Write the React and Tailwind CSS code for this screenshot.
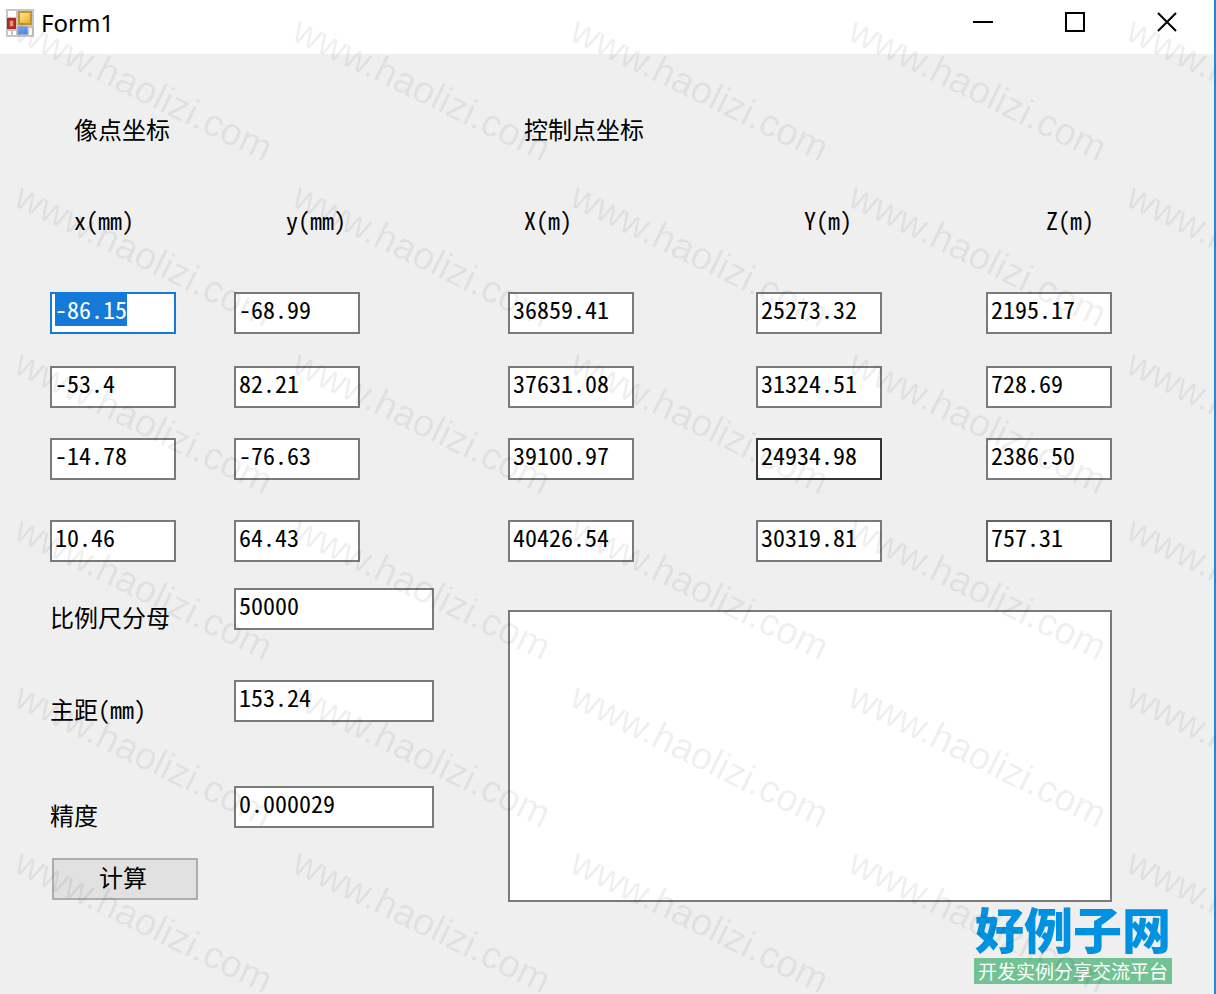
import { useEffect, useRef } from "react";

const columns = [
  { label: "x(mm)", pad: "pl-6" },
  { label: "y(mm)", pad: "pl-13" },
  { label: "X(m)", pad: "pl-4" },
  { label: "Y(m)", pad: "pl-12" },
  { label: "Z(m)", pad: "pl-15" },
];

const rows = [
  { gap: "", values: ["-86.15", "-68.99", "36859.41", "25273.32", "2195.17"] },
  { gap: "mt-8", values: ["-53.4", "82.21", "37631.08", "31324.51", "728.69"] },
  { gap: "mt-[30px]", values: ["-14.78", "-76.63", "39100.97", "24934.98", "2386.50"] },
  { gap: "mt-10", values: ["10.46", "64.43", "40426.54", "30319.81", "757.31"] },
];

const params = [
  { id: "scale", label: "比例尺分母", value: "50000", gap: "" },
  { id: "focal", label: "主距(mm)", value: "153.24", gap: "mt-[50px]" },
  { id: "precision", label: "精度", value: "0.000029", gap: "mt-16" },
];

const grid = "grid grid-cols-[184fr_274fr_248fr_230fr_126fr]";

const field =
  "block h-[42px] border-2 bg-white pl-[3px] pb-[10px] text-2xl leading-6 outline-none selection:bg-[#1479d7] selection:text-white";

function borderFor(row, col) {
  if (row === 2 && col === 3) return "border-[#333333]";
  if (row === 3 && col === 4) return "border-[#646464]";
  return "border-[#7a7a7a] focus:border-[#1479d7]";
}

function FormIcon() {
  return (
    <svg width="30" height="30" viewBox="0 0 30 30" aria-hidden="true">
      <defs>
        <linearGradient id="gold" x1="0" y1="0" x2="1" y2="1">
          <stop offset="0" stopColor="#ffe9a0" />
          <stop offset="1" stopColor="#e8ab14" />
        </linearGradient>
        <linearGradient id="blue" x1="0" y1="0" x2="1" y2="1">
          <stop offset="0" stopColor="#8ab8f8" />
          <stop offset="1" stopColor="#3c78dc" />
        </linearGradient>
      </defs>
      <rect x="1" y="1" width="28" height="28" fill="#c6c6c6" />
      <rect x="3" y="3" width="8" height="6" fill="#fff" />
      <rect x="3" y="23" width="3" height="4" fill="#fff" />
      <rect x="8" y="23" width="3" height="4" fill="#fff" />
      <rect x="24" y="20" width="3" height="7" fill="#fff" />
      <rect x="14" y="4" width="12" height="12" fill="url(#gold)" stroke="#c0932c" strokeWidth="2" />
      <rect x="3" y="11" width="7" height="9" fill="#c8402f" stroke="#a82a24" strokeWidth="2" />
      <rect x="5" y="13" width="3" height="5" fill="#e89484" />
      <rect x="13" y="19" width="9" height="7" fill="url(#blue)" stroke="#6c98dc" strokeWidth="1" />
    </svg>
  );
}

function TitleBar() {
  return (
    <header className="flex h-[54px] items-start bg-white">
      <div className="flex h-[46px] items-center gap-[6px] pl-[5px]">
        <FormIcon />
        <h1 className="font-['Noto_Sans',sans-serif] text-2xl leading-8">Form1</h1>
      </div>
      <div className="ml-auto flex pr-px">
        <button type="button" aria-label="Minimize" className="flex h-11 w-[92px] items-center justify-center">
          <svg width="20" height="20" viewBox="0 0 20 20"><path d="M0 10H20" stroke="#000" strokeWidth="2" /></svg>
        </button>
        <button type="button" aria-label="Maximize" className="flex h-11 w-[92px] items-center justify-center">
          <svg width="20" height="20" viewBox="0 0 20 20"><rect x="1" y="1" width="18" height="18" fill="none" stroke="#000" strokeWidth="2" /></svg>
        </button>
        <button type="button" aria-label="Close" className="flex h-11 w-[92px] items-center justify-center">
          <svg width="20" height="20" viewBox="0 0 20 20"><path d="M1 1L19 19M19 1L1 19" stroke="#000" strokeWidth="2" /></svg>
        </button>
      </div>
    </header>
  );
}

function Watermark() {
  const marks = [];
  for (let r = 0; r < 6; r++) {
    for (let c = 0; c < 5; c++) {
      marks.push([12 + c * 278, 39 + Math.round(r * 166.4)]);
    }
  }
  return (
    <svg className="pointer-events-none absolute inset-0 h-full w-full" aria-hidden="true">
      {marks.map(([x, y]) => (
        <text
          key={`${x}-${y}`}
          transform={`translate(${x} ${y}) rotate(26)`}
          className="fill-black/7 font-['Liberation_Sans',sans-serif] text-[38px]"
        >
          www.haolizi.com
        </text>
      ))}
    </svg>
  );
}

export default function App() {
  const first = useRef(null);

  useEffect(() => {
    first.current.focus();
    first.current.select();
  }, []);

  return (
    <div className="relative flex min-h-screen flex-col overflow-hidden border-r-2 border-[#1f87d8] bg-[#efefef] font-['Noto_Sans_CJK_SC',sans-serif] text-black">
      <TitleBar />
      <form className="pt-[63px] pb-[10px]" onSubmit={(e) => e.preventDefault()}>
        <div className="pr-[102px] pl-[50px] text-2xl leading-6 [font-feature-settings:'hwid']">
          <div className="grid grid-cols-[458fr_604fr]">
            <h2 className="pl-6">像点坐标</h2>
            <h2 className="pl-4">控制点坐标</h2>
          </div>

          <div className={`${grid} mt-[67px] mb-[60px]`}>
            {columns.map((c) => (
              <span key={c.label} className={c.pad}>{c.label}</span>
            ))}
          </div>

          {rows.map((row, r) => (
            <div key={r} className={`${grid} ${row.gap}`}>
              {row.values.map((v, c) => (
                <input
                  key={c}
                  ref={r === 0 && c === 0 ? first : null}
                  type="text"
                  aria-label={`${columns[c].label} ${r + 1}`}
                  defaultValue={v}
                  className={`${field} ${borderFor(r, c)} w-[126px]`}
                />
              ))}
            </div>
          ))}

          <div className="mt-[26px] grid grid-cols-[458fr_604fr]">
            <div>
              {params.map((p) => (
                <div key={p.id} className={`flex items-end ${p.gap}`}>
                  <label htmlFor={p.id} className="w-[184px] pb-px">{p.label}</label>
                  <input
                    id={p.id}
                    type="text"
                    defaultValue={p.value}
                    className={`${field} w-[200px] border-[#7a7a7a] focus:border-[#1479d7]`}
                  />
                </div>
              ))}
              <button
                type="submit"
                className="mt-[30px] ml-[2px] block h-[42px] w-[146px] border-2 border-[#adadad] bg-[#e1e1e1] pr-1 pb-1 leading-6"
              >
                计算
              </button>
            </div>
            <textarea
              aria-label="结果"
              className="mt-[22px] block h-[292px] w-full resize-none border-2 border-[#7a7a7a] bg-white outline-none"
            />
          </div>
        </div>

        <a href="#" className="mt-1 mr-[42px] ml-auto block w-[198px] text-center">
          <span className="mb-2 block text-[49px] leading-11 font-black whitespace-nowrap text-[#0092e0]">好例子网</span>
          <span className="block bg-[#72c294] text-[19px] leading-[26px] whitespace-nowrap text-white">开发实例分享交流平台</span>
        </a>
      </form>
      <Watermark />
    </div>
  );
}
